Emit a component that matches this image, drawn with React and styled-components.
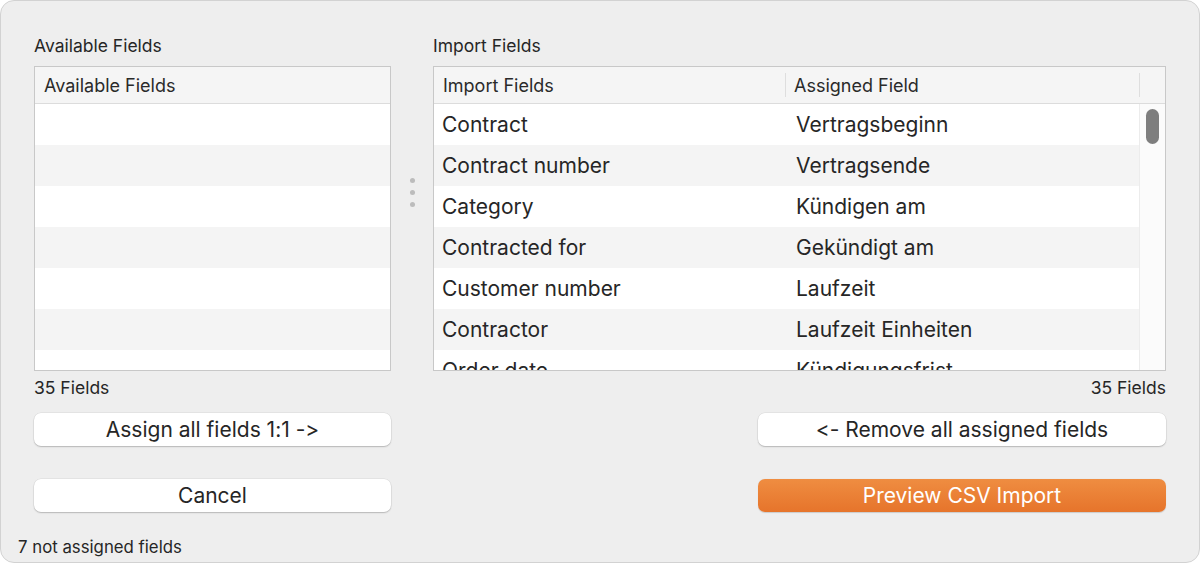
import styled, { createGlobalStyle } from "styled-components";

const GlobalStyle = createGlobalStyle`
  html, body {
    margin: 0;
    background: #ffffff;
  }
  body {
    font-family: Inter, "Noto Sans", "Liberation Sans", sans-serif;
    font-feature-settings: "calt" 0, "liga" 0;
    font-variant-ligatures: none;
    color: #262626;
  }
`;

const Window = styled.div`
  width: 1200px;
  height: 563px;
  box-sizing: border-box;
  background: #eeeeee;
  border: 1px solid #d2d2d2;
  border-radius: 14px;
  padding: 34px 33px 0 17px;
  display: flex;
  flex-direction: column;
  overflow: hidden;
`;

const Layout = styled.div`
  display: grid;
  grid-template-columns: 357px 42px 733px;
  grid-template-rows: 31px 305px 42px 33px;
  padding-left: 16px;
  align-items: start;
`;

const Label = styled.div`
  font-size: 17.5px;
  line-height: 22px;
  grid-column: ${(p) => p.$col};
`;

const Count = styled.div`
  font-size: 17.5px;
  line-height: 20px;
  padding-top: 7px;
  grid-column: ${(p) => p.$col};
  text-align: ${(p) => (p.$right ? "right" : "left")};
`;

const Table = styled.div`
  grid-column: ${(p) => p.$col};
  height: 305px;
  box-sizing: border-box;
  border: 1px solid #c8c8c8;
  background: #ffffff;
  display: flex;
  flex-direction: column;
  overflow: hidden;
`;

const HeaderRow = styled.div`
  display: grid;
  grid-template-columns: ${(p) => p.$cols};
  height: 36px;
  flex-shrink: 0;
  background: #f5f5f5;
  border-bottom: 1px solid #dcdcdc;
`;

const HeaderCell = styled.div`
  display: flex;
  align-items: center;
  padding-left: ${(p) => (p.$first ? "9px" : "8px")};
  font-size: 18px;
  color: #2a2a2a;
  white-space: nowrap;
  border-right: ${(p) => (p.$divider ? "1px solid #dedede" : "none")};
  margin: ${(p) => (p.$divider ? "6px 0" : "0")};
`;

const Body = styled.div`
  flex: 1;
  display: flex;
  min-height: 0;
`;

const Rows = styled.div`
  flex: 1;
  display: flex;
  flex-direction: column;
  overflow: hidden;
`;

const Row = styled.div`
  display: grid;
  grid-template-columns: ${(p) => p.$cols};
  height: 41px;
  flex-shrink: 0;
  align-items: center;
  background: ${(p) => (p.$alt ? "#f4f4f4" : "#ffffff")};
  font-size: 21px;
  color: #262626;
`;

const Cell = styled.div`
  padding-left: ${(p) => (p.$first ? "8px" : "9px")};
  white-space: nowrap;
  overflow: hidden;
`;

const Gutter = styled.div`
  width: 25px;
  flex-shrink: 0;
  border-left: 1px solid #ececec;
  background: #fbfbfb;
  padding-top: 5px;
  display: flex;
  justify-content: center;
`;

const Thumb = styled.div`
  width: 13px;
  height: 35px;
  border-radius: 7px;
  background: #7e7e7e;
`;

const Splitter = styled.div`
  grid-column: 2;
  grid-row: 2;
  display: flex;
  flex-direction: column;
  align-items: center;
  gap: 7px;
  padding-top: 112px;
`;

const Dot = styled.span`
  width: 5px;
  height: 5px;
  border-radius: 50%;
  background: #bcbcbc;
`;

const Button = styled.button`
  grid-column: ${(p) => p.$col};
  justify-self: ${(p) => (p.$end ? "end" : "stretch")};
  width: ${(p) => p.$width || "auto"};
  height: 33px;
  box-sizing: border-box;
  border: none;
  border-radius: 7px;
  font-family: inherit;
  font-feature-settings: "calt" 0, "liga" 0;
  font-size: 21px;
  color: ${(p) => (p.$primary ? "#ffffff" : "#262626")};
  background: ${(p) =>
    p.$primary ? "linear-gradient(#ef8d41, #e6742b)" : "#ffffff"};
  box-shadow: ${(p) =>
    p.$primary
      ? "0 0.5px 1px rgba(0,0,0,0.15)"
      : "0 0 0 0.5px rgba(0,0,0,0.08), 0 1px 1.5px rgba(0,0,0,0.2)"};
  padding: 0;
  cursor: default;
`;

const ButtonRow = styled.div`
  display: grid;
  grid-template-columns: 357px 42px 733px;
  padding-left: 16px;
  margin-top: 33px;
`;

const Status = styled.div`
  margin-top: auto;
  padding-bottom: 5px;
  font-size: 16.8px;
  line-height: 20px;
`;

const importRows = [
  ["Contract", "Vertragsbeginn"],
  ["Contract number", "Vertragsende"],
  ["Category", "Kündigen am"],
  ["Contracted for", "Gekündigt am"],
  ["Customer number", "Laufzeit"],
  ["Contractor", "Laufzeit Einheiten"],
  ["Order date", "Kündigungsfrist"],
];

const leftCols = "1fr";
const rightCols = "353px 354px";

export default function App() {
  return (
    <>
      <GlobalStyle />
      <Window>
        <Layout>
          <Label $col={1}>Available Fields</Label>
          <Label $col={3}>Import Fields</Label>

          <Table $col={1}>
            <HeaderRow $cols={leftCols}>
              <HeaderCell $first>Available Fields</HeaderCell>
            </HeaderRow>
            <Rows>
              {Array.from({ length: 7 }).map((_, i) => (
                <Row key={i} $cols={leftCols} $alt={i % 2 === 1} />
              ))}
            </Rows>
          </Table>
          <Splitter>
            <Dot />
            <Dot />
            <Dot />
          </Splitter>
          <Table $col={3}>
            <HeaderRow $cols="352px 354px 1fr">
              <HeaderCell $first $divider>
                Import Fields
              </HeaderCell>
              <HeaderCell $divider>Assigned Field</HeaderCell>
              <HeaderCell />
            </HeaderRow>
            <Body>
              <Rows>
                {importRows.map(([a, b], i) => (
                  <Row key={a} $cols={rightCols} $alt={i % 2 === 1}>
                    <Cell $first>{a}</Cell>
                    <Cell>{b}</Cell>
                  </Row>
                ))}
              </Rows>
              <Gutter>
                <Thumb />
              </Gutter>
            </Body>
          </Table>

          <Count $col={1}>35 Fields</Count>
          <Count $col={3} $right>
            35 Fields
          </Count>

          <Button $col={1}>Assign all fields 1:1 -&gt;</Button>
          <Button $col={3} $end $width="408px">
            &lt;- Remove all assigned fields
          </Button>
        </Layout>
        <ButtonRow>
          <Button $col={1}>Cancel</Button>
          <Button $col={3} $end $width="408px" $primary>
            Preview CSV Import
          </Button>
        </ButtonRow>
        <Status>7 not assigned fields</Status>
      </Window>
    </>
  );
}
